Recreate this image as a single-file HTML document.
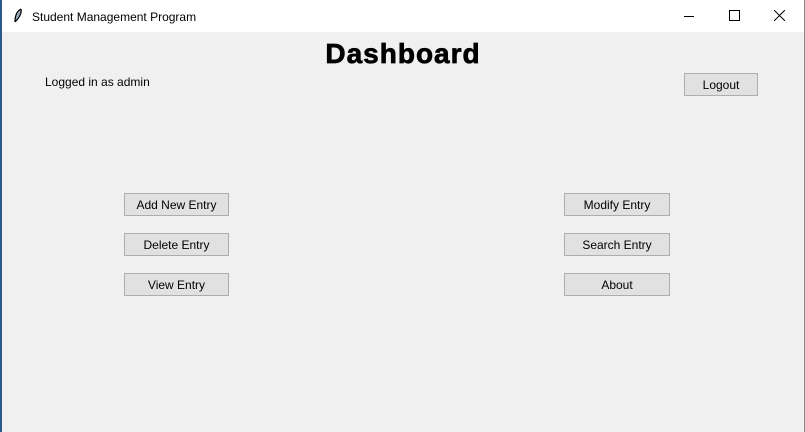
<!DOCTYPE html>
<html><head><style>
body{margin:0;width:805px;height:432px;overflow:hidden;background:#f0f0f0;font-family:"Liberation Sans",sans-serif;position:relative}
.tb{position:absolute;left:0;top:0;width:805px;height:32px;background:#fff}
.bl{position:absolute;left:0;top:0;width:2px;height:432px;background:#2b5a8a}
.br{position:absolute;right:0;top:0;width:1px;height:432px;background:#888}
.t{position:absolute;font-size:12px;color:#000}
.btn{position:absolute;box-sizing:border-box;background:#e1e1e1;border:1px solid #adadad;font-size:12px;text-align:center;line-height:22px;color:#000}
</style></head><body>
<div class="tb"></div><div class="bl"></div><div class="br"></div>
<svg style="position:absolute;left:13px;top:8px" width="10" height="16"><path d="M8 1 C4 3 2 8 2 14 M8 1 C9 5 6 10 2 14" stroke="#000" fill="#9ab" stroke-width="1.2"/></svg>
<div class="t" style="left:32px;top:10px">Student Management Program</div>
<div style="position:absolute;left:684px;top:16px;width:10px;height:1px;background:#000"></div>
<div style="position:absolute;left:729px;top:10px;width:9px;height:9px;border:1px solid #000"></div>
<svg style="position:absolute;left:774px;top:10px" width="11" height="11"><path d="M0 0L11 11M11 0L0 11" stroke="#000" stroke-width="1"/></svg>
<div style="position:absolute;left:0;width:806px;top:38px;text-align:center;font-weight:900;font-size:28px;letter-spacing:1px;-webkit-text-stroke:0.7px #000">Dashboard</div>
<div class="t" style="left:45px;top:75px">Logged in as admin</div>
<div class="btn" style="left:684px;top:73px;width:74px;height:23px">Logout</div>
<div class="btn" style="left:124px;top:193px;width:105px;height:23px">Add New Entry</div>
<div class="btn" style="left:124px;top:233px;width:105px;height:23px">Delete Entry</div>
<div class="btn" style="left:124px;top:273px;width:105px;height:23px">View Entry</div>
<div class="btn" style="left:564px;top:193px;width:106px;height:23px">Modify Entry</div>
<div class="btn" style="left:564px;top:233px;width:106px;height:23px">Search Entry</div>
<div class="btn" style="left:564px;top:273px;width:106px;height:23px">About</div>
</body></html>
